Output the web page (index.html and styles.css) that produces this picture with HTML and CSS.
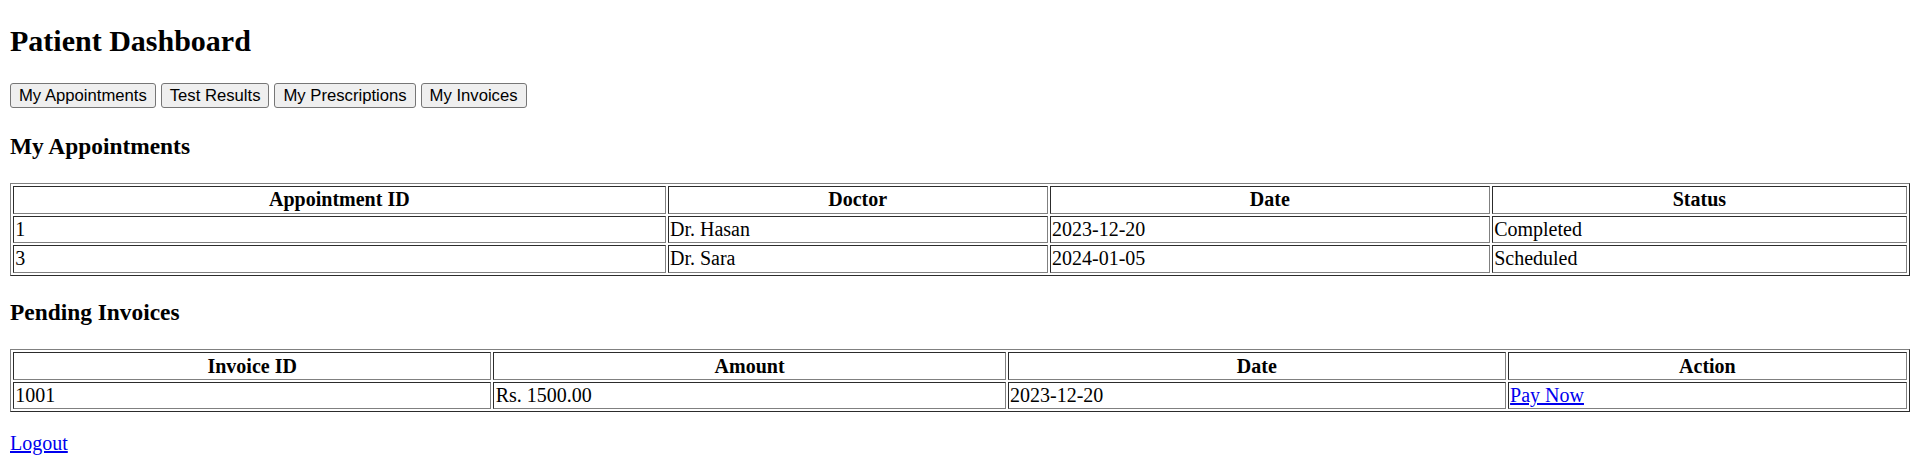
FILE: index.html
```html
<!DOCTYPE html>
<html lang="en">
<head>
<meta charset="utf-8">
<title>Patient Dashboard</title>
<link rel="stylesheet" href="styles.css">
</head>
<body>
<h2 class="page-title">Patient Dashboard</h2>
<div class="tabs">
  <button class="tab">My Appointments</button>
  <button class="tab">Test Results</button>
  <button class="tab">My Prescriptions</button>
  <button class="tab">My Invoices</button>
</div>

<h3 class="section-title">My Appointments</h3>
<table class="data-table">
  <thead>
    <tr><th>Appointment ID</th><th>Doctor</th><th>Date</th><th>Status</th></tr>
  </thead>
  <tbody>
    <tr><td>1</td><td>Dr. Hasan</td><td>2023-12-20</td><td>Completed</td></tr>
    <tr><td>3</td><td>Dr. Sara</td><td>2024-01-05</td><td>Scheduled</td></tr>
  </tbody>
</table>

<h3 class="section-title">Pending Invoices</h3>
<table class="data-table">
  <thead>
    <tr><th>Invoice ID</th><th>Amount</th><th>Date</th><th>Action</th></tr>
  </thead>
  <tbody>
    <tr><td>1001</td><td>Rs. 1500.00</td><td>2023-12-20</td><td><a class="link" href="#">Pay Now</a></td></tr>
  </tbody>
</table>

<p class="footer"><a class="link" href="#">Logout</a></p>
</body>
</html>
```

FILE: styles.css
```css
html {
  background: #ffffff;
}

body {
  margin: 0;
  padding: 0 10px;
  font-family: "Liberation Serif", "Times New Roman", serif;
  font-size: 20px;
  color: #000000;
}

.page-title {
  font-size: 30px;
  font-weight: bold;
  margin: 0 0 24.9px;
  padding-top: 24px;
  line-height: 34px;
}

.tabs {
  display: block;
  line-height: 26.5px;
}

.tab {
  font-family: "Liberation Sans", Arial, sans-serif;
  font-size: 16.67px;
  line-height: 19px;
  color: #000000;
  background: #efefef;
  border: 1px solid #767676;
  border-radius: 3px;
  padding: 2px 8px;
  margin: 0;
  vertical-align: top;
}

.section-title {
  font-size: 23.4px;
  line-height: 27px;
  font-weight: bold;
  margin: 23.4px 0;
}

.data-table {
  width: 100%;
  border: 1px outset #808080;
  border-spacing: 2.5px;
  border-collapse: separate;
}

.data-table th,
.data-table td {
  border: 1px inset #808080;
  padding: 1.25px;
}

.data-table th {
  font-weight: bold;
  text-align: center;
}

.data-table td {
  text-align: left;
}

.footer {
  margin: 20px 0;
}

.link {
  color: #0000ee;
  text-decoration: underline;
}
```
